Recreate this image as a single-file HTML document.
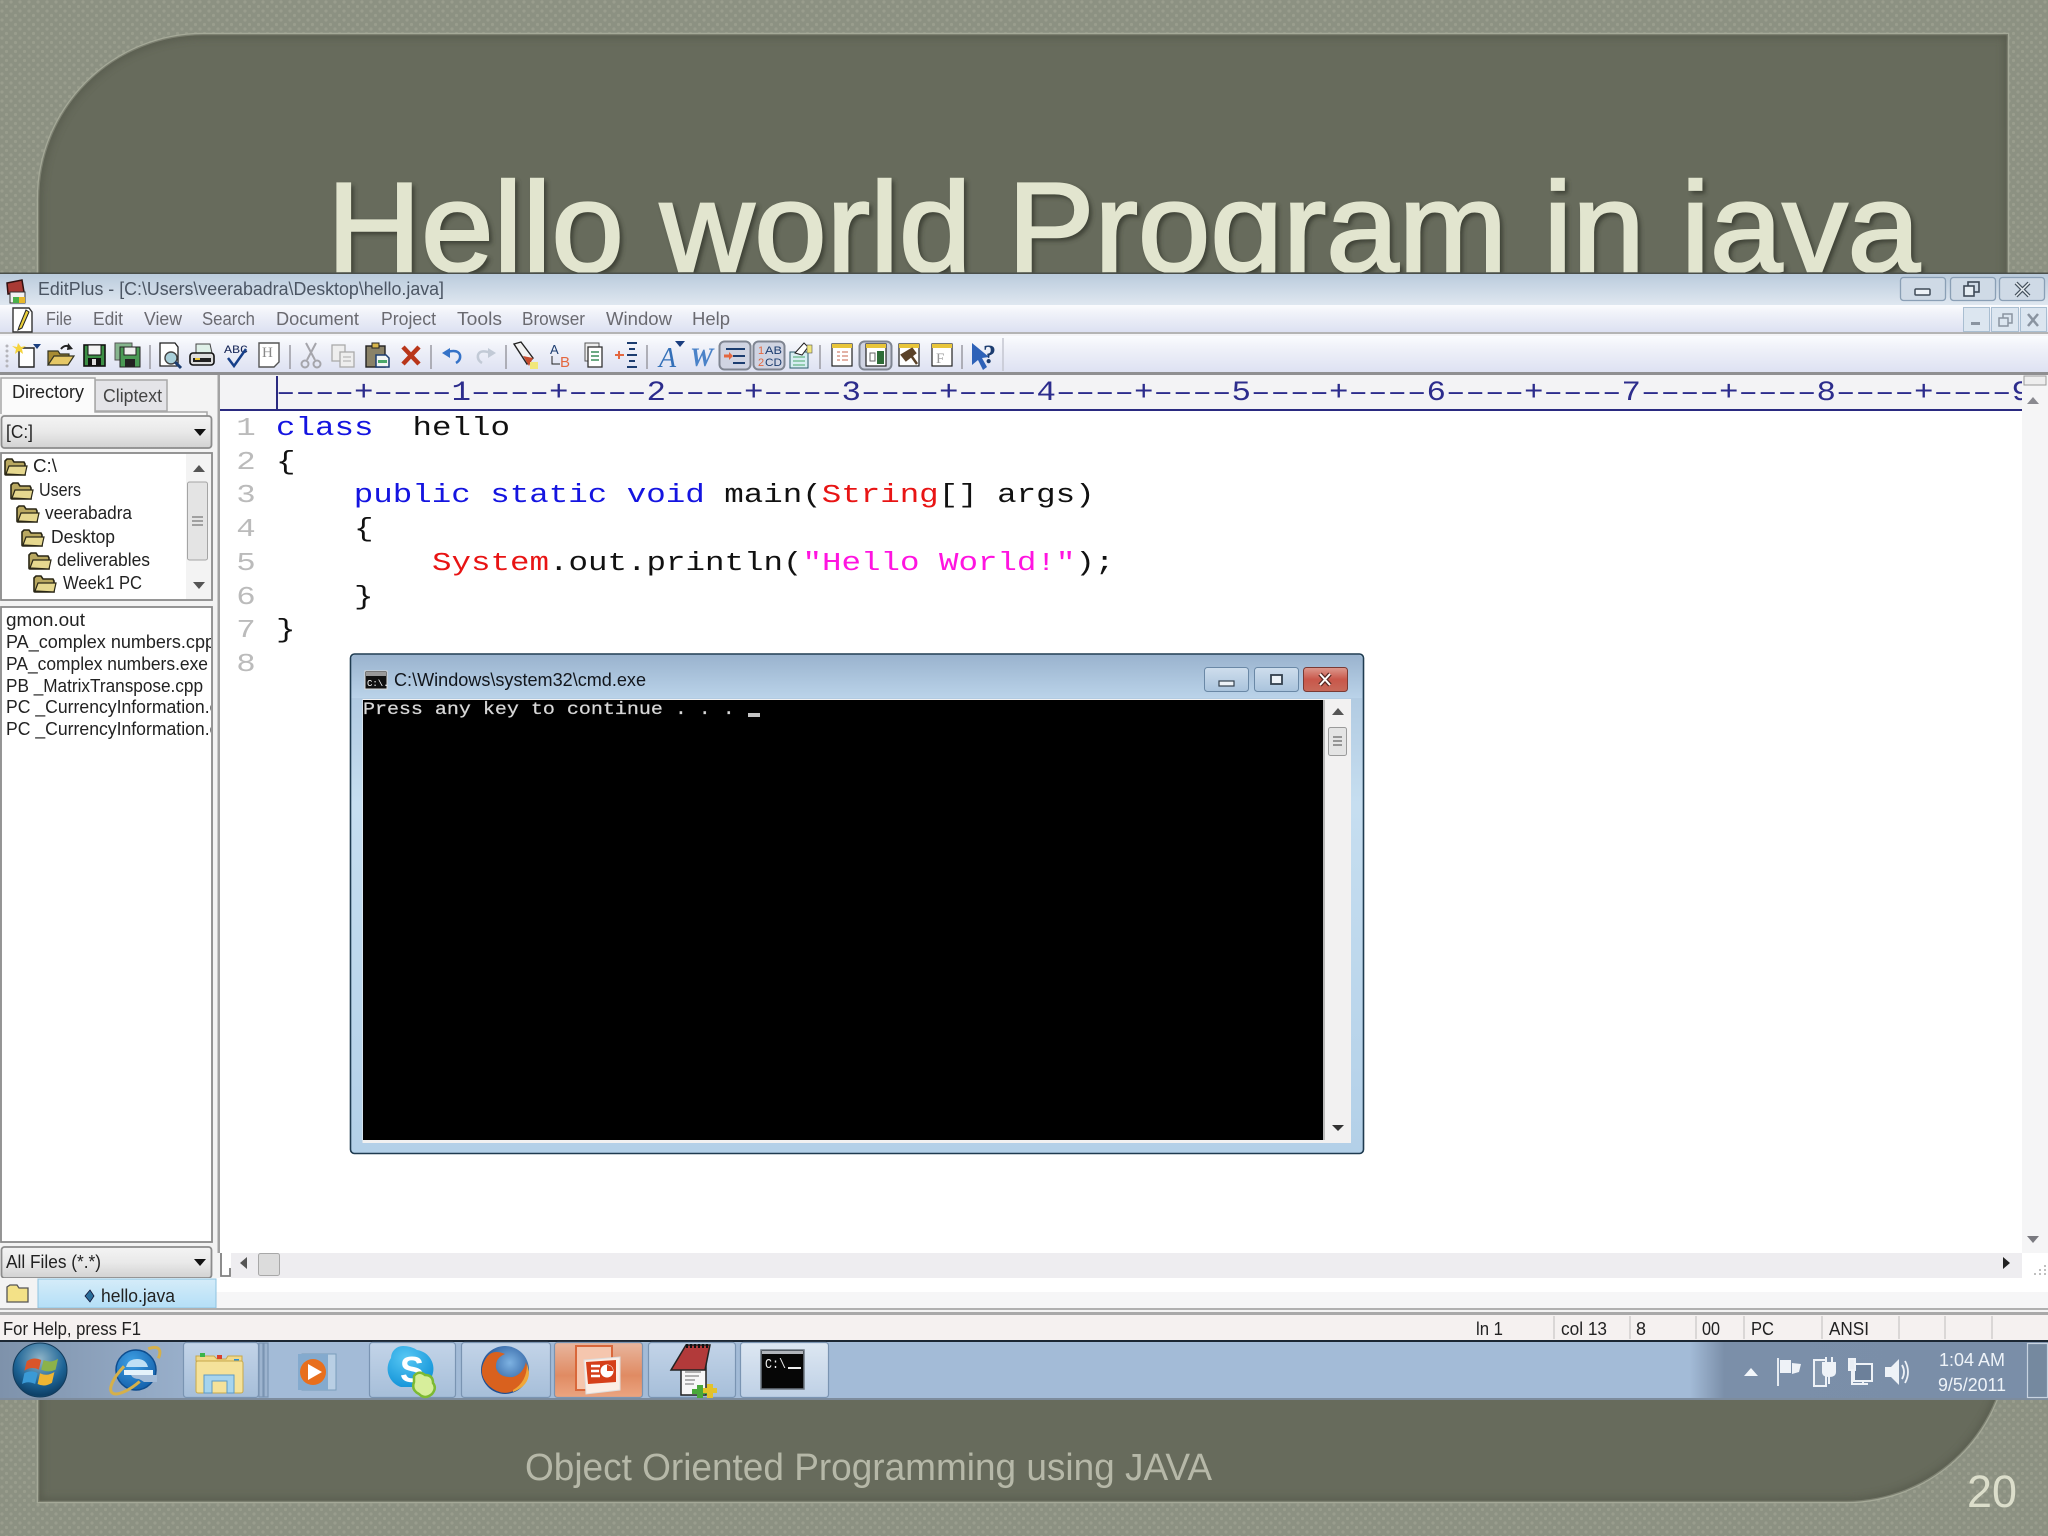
<!DOCTYPE html>
<html><head><meta charset="utf-8"><title>Hello world Program in java</title>
<style>
html,body{margin:0;padding:0;background:#8b9080}
svg{display:block}
text{font-family:"Liberation Sans",sans-serif;white-space:pre}
.m{font-family:"Liberation Mono",monospace}
.ui{font-size:18px;fill:#222}
.menu{font-size:18px;fill:#6a6a70}
</style></head><body>
<svg xmlns="http://www.w3.org/2000/svg" width="2048" height="1536" viewBox="0 0 2048 1536">
<defs>
<pattern id="dots" width="9" height="9" patternUnits="userSpaceOnUse"><rect width="9" height="9" fill="#8c9182"/><circle cx="2" cy="2" r="1.6" fill="#999d8d"/><circle cx="6.5" cy="6.5" r="1.6" fill="#999d8d"/></pattern>
<linearGradient id="tb" x1="0" y1="0" x2="0" y2="1"><stop offset="0" stop-color="#bacbdc"/><stop offset="1" stop-color="#dfe7f0"/></linearGradient>
<linearGradient id="mb" x1="0" y1="0" x2="0" y2="1"><stop offset="0" stop-color="#fbfcfe"/><stop offset=".3" stop-color="#f0f2f9"/><stop offset="1" stop-color="#dde1f2"/></linearGradient>
<linearGradient id="combo" x1="0" y1="0" x2="0" y2="1"><stop offset="0" stop-color="#f4f4f4"/><stop offset=".5" stop-color="#e9e9e9"/><stop offset="1" stop-color="#d2d2d2"/></linearGradient>
<linearGradient id="cmdt" x1="0" y1="0" x2="0" y2="1"><stop offset="0" stop-color="#9ab3ce"/><stop offset="1" stop-color="#bad3e9"/></linearGradient>
<linearGradient id="cmdf" x1="0" y1="0" x2="0" y2="1"><stop offset="0" stop-color="#a9c3dc"/><stop offset=".3" stop-color="#c6def0"/><stop offset="1" stop-color="#b3d0e8"/></linearGradient>
<linearGradient id="task" x1="0" y1="0" x2="1" y2="0"><stop offset="0" stop-color="#7e92ab"/><stop offset=".07" stop-color="#93a9c4"/><stop offset=".13" stop-color="#a3bbd7"/><stop offset=".825" stop-color="#a3bbd7"/><stop offset=".842" stop-color="#7b8fa9"/><stop offset="1" stop-color="#7a8ea8"/></linearGradient>
<linearGradient id="btn" x1="0" y1="0" x2="0" y2="1"><stop offset="0" stop-color="#c3d4e8"/><stop offset="1" stop-color="#a6bed9"/></linearGradient>
<linearGradient id="btnw" x1="0" y1="0" x2="0" y2="1"><stop offset="0" stop-color="#dde7f2"/><stop offset="1" stop-color="#bed0e5"/></linearGradient>
<linearGradient id="ppt" x1="0" y1="0" x2="0" y2="1"><stop offset="0" stop-color="#e8b69e"/><stop offset=".6" stop-color="#e08b63"/><stop offset="1" stop-color="#eba581"/></linearGradient>
<linearGradient id="closeb" x1="0" y1="0" x2="0" y2="1"><stop offset="0" stop-color="#dd9a8f"/><stop offset=".5" stop-color="#c9574a"/><stop offset="1" stop-color="#c76a5a"/></linearGradient>
<linearGradient id="winb" x1="0" y1="0" x2="0" y2="1"><stop offset="0" stop-color="#cfdeed"/><stop offset="1" stop-color="#a9c3dc"/></linearGradient>
<linearGradient id="tab" x1="0" y1="0" x2="0" y2="1"><stop offset="0" stop-color="#d5ecf9"/><stop offset="1" stop-color="#b4dff7"/></linearGradient>
<radialGradient id="orb" cx=".5" cy=".3" r=".75"><stop offset="0" stop-color="#8fb4c8"/><stop offset=".6" stop-color="#1d6496"/><stop offset=".9" stop-color="#0d3f66"/><stop offset="1" stop-color="#35a5cc"/></radialGradient>
<radialGradient id="sky" cx=".4" cy=".3" r=".8"><stop offset="0" stop-color="#58c8f4"/><stop offset="1" stop-color="#0d8fd6"/></radialGradient>
<radialGradient id="ff" cx=".6" cy=".35" r=".6"><stop offset="0" stop-color="#7db2e2"/><stop offset="1" stop-color="#1d4e92"/></radialGradient>
<radialGradient id="ie" cx=".4" cy=".3" r=".8"><stop offset="0" stop-color="#3fa0e4"/><stop offset="1" stop-color="#0f5aa6"/></radialGradient>
<filter id="b2"><feGaussianBlur stdDeviation="2"/></filter>
<filter id="b5"><feGaussianBlur stdDeviation="4"/></filter>
<clipPath id="panel"><path d="M203 34H2008V1340A162 162 0 0 1 1846 1502H38V199A165 165 0 0 1 203 34Z"/></clipPath>
<clipPath id="flist"><rect x="0" y="606" width="211" height="300"/></clipPath>
<clipPath id="rul"><rect x="220" y="376" width="1802" height="34"/></clipPath>
<g id="fd"><path d="M1 6V17a1 1 0 0 0 1 1H21V7L20 5H10L8 2H3L1 4Z" fill="#b9a860" stroke="#2a2716" stroke-width="1.6"/><path d="M2 17L5 9H23L21 18Z" fill="#e6d88f" stroke="#2a2716" stroke-width="1.2"/></g>
</defs>

<!-- slide background -->
<rect width="2048" height="1536" fill="url(#dots)"/>
<path d="M203 34H2008V1340A162 162 0 0 1 1846 1502H38V199A165 165 0 0 1 203 34Z" fill="#676b5c" stroke="#a5a998" stroke-width="2.5"/>
<g clip-path="url(#panel)"><path d="M203 34H2008V1340A162 162 0 0 1 1846 1502H38V199A165 165 0 0 1 203 34Z" fill="none" stroke="#53574a" stroke-width="7" opacity=".8" filter="url(#b5)"/></g>

<!-- slide title -->
<text x="330" y="274" font-size="127" fill="#33362c" stroke="#33362c" stroke-width="2" opacity=".75" textLength="1593" lengthAdjust="spacingAndGlyphs" filter="url(#b2)">Hello world Program in java</text>
<text x="327" y="271" font-size="127" fill="#e2e5cf" stroke="#e2e5cf" stroke-width="2.5" textLength="1593" lengthAdjust="spacingAndGlyphs">Hello world Program in java</text>

<!-- footer -->
<text x="525" y="1480" font-size="38" fill="#b6b8a8" textLength="687" lengthAdjust="spacingAndGlyphs">Object Oriented Programming using JAVA</text>
<text x="1967" y="1507" font-size="45" fill="#dcdecb" textLength="50" lengthAdjust="spacingAndGlyphs">20</text>

<!-- EditPlus window -->
<rect x="0" y="273" width="2048" height="1068" fill="#fff"/>
<rect x="0" y="272.500" width="2048" height="1.500" fill="#4a4f4a"/>
<rect x="0" y="274" width="2048" height="31" fill="url(#tb)"/>
<text x="38" y="295" font-size="18" fill="#4b5563" textLength="406" lengthAdjust="spacingAndGlyphs">EditPlus - [C:\Users\veerabadra\Desktop\hello.java]</text>
<!-- app icon -->
<g transform="translate(5,279)"><path d="M2 4L17 1 19 13 3 15Z" fill="#a83a34" stroke="#301010" stroke-width="1.5"/><rect x="5" y="13" width="15" height="11" fill="#f2f2f2" stroke="#333"/><rect x="8" y="18" width="6" height="6" fill="#4bb04b"/><rect x="14" y="18" width="6" height="6" fill="#e8b82c"/></g>
<!-- caption buttons -->
<g fill="#cfdae6" stroke="#8a9fb5" stroke-width="1.3">
<rect x="1900.5" y="277.5" width="45" height="23" rx="3"/><rect x="1950.5" y="277.5" width="45" height="23" rx="3"/><rect x="1999.5" y="277.5" width="45" height="23" rx="3"/></g>
<rect x="1915" y="289" width="15" height="6" rx="1" fill="#eef3f8" stroke="#3e4a57" stroke-width="1.5"/>
<g fill="none" stroke="#3e4a57" stroke-width="1.6"><rect x="1968" y="282" width="11" height="10" fill="#cfdae6"/><rect x="1964" y="286" width="10" height="10" fill="#e6edf3"/></g>
<path d="M2016 283l13 13M2029 283l-13 13" stroke="#46525f" stroke-width="4"/><path d="M2016 283l13 13M2029 283l-13 13" stroke="#eaf0f5" stroke-width="1.5"/>

<!-- menu -->
<rect x="0" y="305" width="2048" height="27" fill="url(#mb)"/>
<rect x="0" y="332" width="2048" height="2" fill="#b4b4b4"/><rect x="0" y="334" width="2048" height="2" fill="#f4f4f6"/>
<g transform="translate(12,307)"><path d="M1 1H17L20 5V25H1Z" fill="#fff" stroke="#333" stroke-width="1.4"/><path d="M7 20L14 3 17 5 10 21 6 23Z" fill="#e9cf3a" stroke="#222"/></g>
<g class="menu">
<text class="menu" x="46" y="325" textLength="26" lengthAdjust="spacingAndGlyphs">File</text>
<text class="menu" x="93" y="325" textLength="30" lengthAdjust="spacingAndGlyphs">Edit</text>
<text class="menu" x="144" y="325" textLength="38" lengthAdjust="spacingAndGlyphs">View</text>
<text class="menu" x="202" y="325" textLength="53" lengthAdjust="spacingAndGlyphs">Search</text>
<text class="menu" x="276" y="325" textLength="83" lengthAdjust="spacingAndGlyphs">Document</text>
<text class="menu" x="381" y="325" textLength="55" lengthAdjust="spacingAndGlyphs">Project</text>
<text class="menu" x="457" y="325" textLength="45" lengthAdjust="spacingAndGlyphs">Tools</text>
<text class="menu" x="522" y="325" textLength="63" lengthAdjust="spacingAndGlyphs">Browser</text>
<text class="menu" x="606" y="325" textLength="66" lengthAdjust="spacingAndGlyphs">Window</text>
<text class="menu" x="692" y="325" textLength="38" lengthAdjust="spacingAndGlyphs">Help</text>
</g>
<g fill="#dce6f0" stroke="#a9bed1"><rect x="1963.5" y="307.5" width="26" height="24"/><rect x="1991.5" y="307.5" width="27" height="24"/><rect x="2020.5" y="307.5" width="26" height="24"/></g>
<rect x="1971" y="322" width="9" height="3" fill="#8a94a0"/>
<g fill="none" stroke="#8a94a0" stroke-width="1.5"><rect x="2003" y="314" width="9" height="9"/><rect x="1999" y="318" width="9" height="8" fill="#dce6f0"/></g>
<path d="M2028 314l10 12M2038 314l-10 12" stroke="#8a94a0" stroke-width="2.5"/>

<!-- toolbar -->
<rect x="0" y="336" width="2048" height="37" fill="url(#mb)"/>
<rect x="0" y="372" width="2048" height="3" fill="#8f8f91"/>
<g fill="#b5b5bb"><circle cx="7" cy="346" r="1.5"/><circle cx="7" cy="351" r="1.5"/><circle cx="7" cy="356" r="1.5"/><circle cx="7" cy="361" r="1.5"/><circle cx="7" cy="366" r="1.5"/></g>
<g stroke="#9a9aa2" stroke-width="1.5"><path d="M150 345V369M290 345V369M431 345V369M506 345V369M647 345V369M820 345V369M962 345V369"/></g>
<path d="M1003 338V371" stroke="#c4c6d0" stroke-width="1.5"/>
<!-- new -->
<g transform="translate(27,355)"><path d="M-8-7H7V12H-8Z" fill="#fff" stroke="#222" stroke-width="1.4"/><path d="M-9-12l3 4 5-1-4 3 1 5-4-3-4 3 1-5-4-3 5 1Z" fill="#f5d33b"/><path d="M6-11H14L10-6Z" fill="#1b3f80"/></g>
<!-- open -->
<g transform="translate(61,355)"><path d="M-13 10V-4H-3L-1-1H8V4" fill="#a88b33" stroke="#332" stroke-width="1.2"/><path d="M-13 10L-7 1H13L7 10Z" fill="#e6c866" stroke="#332" stroke-width="1.2"/><path d="M0-6Q4-11 9-8" fill="none" stroke="#222" stroke-width="2"/><path d="M7-12L12-6 6-5Z" fill="#222"/></g>
<!-- save -->
<g transform="translate(95,355)"><rect x="-11" y="-10" width="21" height="21" fill="#3c8f45" stroke="#111" stroke-width="1.600"/><rect x="-7" y="-10" width="13" height="10" fill="#f4f4f4" stroke="#111"/><rect x="-7" y="3" width="13" height="8" fill="#111"/><rect x="-3" y="4" width="4" height="6" fill="#ddd"/></g>
<!-- save all -->
<g transform="translate(128,355)"><rect x="-13" y="-12" width="17" height="17" fill="#86b58e" stroke="#555"/><rect x="-8" y="-8" width="20" height="20" fill="#4a9a55" stroke="#222"/><rect x="-4" y="-8" width="12" height="8" fill="#eee" stroke="#222"/><rect x="-3" y="4" width="10" height="8" fill="#222"/></g>
<!-- preview -->
<g transform="translate(170,355)"><path d="M-10-12H5L8-8V11H-10Z" fill="#fff" stroke="#222" stroke-width="1.3"/><circle cx="1" cy="3" r="6" fill="#a9d0da" stroke="#444" stroke-width="1.4"/><path d="M5 7L11 13" stroke="#1c3d70" stroke-width="3"/></g>
<!-- print -->
<g transform="translate(202,355)"><path d="M-6-11H8L10-2H-6Z" fill="#dff0e8" stroke="#444"/><rect x="-12" y="-2" width="24" height="12" rx="3" fill="#ddd" stroke="#111" stroke-width="1.6"/><rect x="-9" y="3" width="18" height="4" fill="#222"/><rect x="-7" y="3" width="5" height="2" fill="#e8c53a"/></g>
<!-- spell -->
<g transform="translate(236,355)"><text x="-12" y="-2" class="m" font-size="11" fill="#1b2a5a" textLength="24" lengthAdjust="spacingAndGlyphs">ABC</text><path d="M-8 3L-2 11 10-6" fill="none" stroke="#17408a" stroke-width="2.500"/></g>
<!-- H -->
<g transform="translate(269,355)"><path d="M-10-12H10V7L5 12H-10Z" fill="#fff" stroke="#555" stroke-width="1.4"/><text x="-7" y="2" font-size="15" fill="#888" style="font-family:'Liberation Serif',serif">H</text></g>
<!-- cut -->
<g transform="translate(311,355)" fill="none" stroke="#a5a5ab" stroke-width="2"><path d="M-5-12L4 5M5-12L-4 5"/><circle cx="-6" cy="9" r="3.5"/><circle cx="6" cy="9" r="3.5"/></g>
<!-- copy -->
<g transform="translate(343,355)" fill="#eee" stroke="#aaa" stroke-width="1.3"><rect x="-11" y="-10" width="13" height="16"/><rect x="-3" y="-3" width="14" height="15"/><path d="M0 2H8M0 6H8" stroke-width="1"/></g>
<!-- paste -->
<g transform="translate(377,355)"><rect x="-11" y="-9" width="19" height="21" fill="#8a8268" stroke="#222" stroke-width="1.4"/><rect x="-5" y="-12" width="7" height="5" fill="#d8b54a" stroke="#222"/><path d="M-1 0H9L12 3V12H-1Z" fill="#f1f5f4" stroke="#1c3d70" stroke-width="1.5"/><rect x="1" y="5" width="9" height="3" fill="#4aa86a"/></g>
<!-- delete -->
<path d="M403 347L419 364M419 347L403 364" stroke="#b9361a" stroke-width="4.5" fill="none"/>
<!-- undo redo -->
<g fill="none" stroke-width="2.500"><path d="M447 352Q458 349 460 355Q461 360 456 363" stroke="#3573c8"/><path d="M491 353Q480 349 478 355Q477 360 482 363" stroke="#c2cad6"/></g>
<path d="M442 353L450 348 450 358Z" fill="#3573c8"/><path d="M496 353L488 348 488 358Z" fill="#c2cad6"/>
<!-- find tools -->
<g transform="translate(526,355)"><path d="M-12-11L-5-13 7 3 1 9Z" fill="#f2f2f2" stroke="#222" stroke-width="1.4"/><path d="M-3 1L7 3 3 11Z" fill="#c54a2c"/><rect x="4" y="7" width="8" height="7" fill="#f1e77b"/></g>
<g transform="translate(560,355)"><text x="-10" y="-1" font-size="13" fill="#1c3d70">A</text><text x="0" y="12" font-size="15" fill="#e4673f">B</text><path d="M-8 1V9H0" stroke="#222" fill="none"/></g>
<g transform="translate(594,355)"><rect x="-9" y="-12" width="14" height="18" fill="#eee" stroke="#555"/><rect x="-6" y="-8" width="14" height="20" fill="#fff" stroke="#333" stroke-width="1.3"/><path d="M-3-3H5M-3 1H5M-3 5H5" stroke="#3d8d5a" stroke-width="1.5"/></g>
<g transform="translate(627,355)"><path d="M-12 0H-3M-8-4V4" stroke="#e4673f" stroke-width="2"/><path d="M0-12H10M2-6H8M0 0H10M2 6H8M0 12H10" stroke="#1c3d70" stroke-width="2"/></g>
<!-- font -->
<text x="659" y="367" font-size="28" font-style="italic" fill="#3470b8" style="font-family:'Liberation Serif',serif">A</text><path d="M675 341H685L680 347Z" fill="#1b3f80"/>
<text x="690" y="366" font-size="26" font-style="italic" font-weight="bold" fill="#4a82c8" style="font-family:'Liberation Serif',serif">W</text>
<!-- toggled -->
<rect x="719.5" y="341.5" width="31" height="28" rx="5" fill="#d0d4e2" stroke="#7f8591" stroke-width="2"/>
<path d="M726 349H745M733 356H745M733 363H745" stroke="#1c3d70" stroke-width="2"/><path d="M724 356H731" stroke="#e4673f" stroke-width="3"/><path d="M729 352L733 356 729 360Z" fill="#e4673f"/>
<rect x="753.5" y="341.5" width="31" height="28" rx="5" fill="#d0d4e2" stroke="#7f8591" stroke-width="2"/>
<text x="758" y="354" font-size="11" fill="#e4673f">1</text><text x="758" y="366" font-size="11" fill="#e4673f">2</text><text x="765" y="354" font-size="11" fill="#1c3d70" textLength="17" lengthAdjust="spacingAndGlyphs">AB</text><text x="765" y="366" font-size="11" fill="#1c3d70" textLength="17" lengthAdjust="spacingAndGlyphs">CD</text>
<g transform="translate(801,355)"><rect x="-11" y="-3" width="18" height="16" fill="#d7eef2" stroke="#2b5d6b"/><path d="M-8 2H4M-8 6H4M-8 10H4" stroke="#4aa86a"/><path d="M-6-2L3-12 7-8 1 0Z" fill="#fff" stroke="#222"/><rect x="6" y="-10" width="5" height="8" fill="#f1e77b" stroke="#555" stroke-width=".6"/></g>
<!-- panels -->
<g transform="translate(842,355)"><rect x="-10" y="-11" width="20" height="22" fill="#fff" stroke="#222" stroke-width="1.2"/><rect x="-10" y="-11" width="20" height="4" fill="#e8c53a"/><path d="M-5-3H-2M-5 1H-2M-5 5H-2M0-3H6M0 1H6M0 5H6" stroke="#c7664c"/></g>
<rect x="859.5" y="341.5" width="32" height="28" rx="5" fill="#d0d4e2" stroke="#7f8591" stroke-width="2"/>
<g transform="translate(876,355)"><rect x="-10" y="-11" width="20" height="22" fill="#fff" stroke="#222" stroke-width="1.2"/><rect x="-10" y="-11" width="20" height="4" fill="#e8c53a"/><rect x="1" y="-4" width="7" height="13" fill="#2d6b36"/><rect x="-6" y="-2" width="5" height="8" fill="none" stroke="#666"/></g>
<g transform="translate(909,355)"><rect x="-10" y="-11" width="20" height="22" fill="#fff" stroke="#222" stroke-width="1.2"/><rect x="-10" y="-11" width="20" height="4" fill="#e8c53a"/><path d="M-7 0L3-6 6-2 -3 5ZM1-1L8 9" stroke="#5b4228" stroke-width="2.5" fill="#5b4228"/></g>
<g transform="translate(942,355)"><rect x="-10" y="-11" width="20" height="22" fill="#fff" stroke="#222" stroke-width="1.2"/><rect x="-10" y="-11" width="20" height="4" fill="#e8c53a"/><text x="-6" y="8" font-size="15" fill="#999" style="font-family:'Liberation Serif',serif">F</text></g>
<path d="M972 343V365L978 360 983 370 987 367 982 358 989 357Z" fill="#2e62b8"/>
<text x="983" y="363" font-size="26" font-weight="bold" fill="#1c3d70" style="font-family:'Liberation Serif',serif">?</text>

<!-- left sidebar -->
<rect x="0" y="375" width="220" height="935" fill="#f3f3f3"/>
<rect x="95" y="380" width="72" height="31" fill="#e4e4e8" stroke="#a8a8a8" stroke-width="1.5"/>
<path d="M1 414V378H95V412H207V416" fill="#fbfbfb" stroke="#a8a8a8" stroke-width="1.5"/>
<text class="ui" x="12" y="398" textLength="72" lengthAdjust="spacingAndGlyphs">Directory</text>
<text x="103" y="402" font-size="18" fill="#444" textLength="59" lengthAdjust="spacingAndGlyphs">Cliptext</text>
<rect x="1.5" y="416" width="210" height="32" rx="3" fill="url(#combo)" stroke="#8c8c8c" stroke-width="1.8"/>
<text class="ui" x="6" y="438" textLength="27" lengthAdjust="spacingAndGlyphs">[C:]</text>
<path d="M194 429H206L200 436Z" fill="#111"/>
<!-- tree -->
<rect x="1" y="453" width="211" height="147" fill="#fff" stroke="#8a8a8a" stroke-width="1.8"/>
<rect x="186" y="454" width="25" height="145" fill="#f3f3f3"/>
<path d="M193 472H205L199 465Z" fill="#555"/><path d="M193 582H205L199 589Z" fill="#555"/>
<rect x="187.5" y="482" width="20" height="78" rx="2" fill="#e4e4e4" stroke="#a4a4a4"/><path d="M192 517H203M192 521H203M192 525H203" stroke="#777" stroke-width="1.2"/>
<use href="#fd" x="4" y="457"/><use href="#fd" x="10" y="481"/><use href="#fd" x="16" y="504"/><use href="#fd" x="21" y="528"/><use href="#fd" x="28" y="551"/><use href="#fd" x="33" y="574"/>
<text class="ui" x="33" y="472" textLength="24" lengthAdjust="spacingAndGlyphs">C:\</text>
<text class="ui" x="39" y="496" textLength="42" lengthAdjust="spacingAndGlyphs">Users</text>
<text class="ui" x="45" y="519" textLength="87" lengthAdjust="spacingAndGlyphs">veerabadra</text>
<text class="ui" x="51" y="543" textLength="64" lengthAdjust="spacingAndGlyphs">Desktop</text>
<text class="ui" x="57" y="566" textLength="93" lengthAdjust="spacingAndGlyphs">deliverables</text>
<text class="ui" x="63" y="589" textLength="79" lengthAdjust="spacingAndGlyphs">Week1 PC</text>
<!-- file list -->
<rect x="1" y="607" width="211" height="635" fill="#fff" stroke="#8a8a8a" stroke-width="1.8"/>
<g clip-path="url(#flist)">
<text class="ui" x="6" y="626" textLength="79" lengthAdjust="spacingAndGlyphs">gmon.out</text>
<text class="ui" x="6" y="648" textLength="209" lengthAdjust="spacingAndGlyphs">PA_complex numbers.cpp</text>
<text class="ui" x="6" y="670" textLength="202" lengthAdjust="spacingAndGlyphs">PA_complex numbers.exe</text>
<text class="ui" x="6" y="692" textLength="197" lengthAdjust="spacingAndGlyphs">PB _MatrixTranspose.cpp</text>
<text class="ui" x="6" y="713" textLength="232" lengthAdjust="spacingAndGlyphs">PC _CurrencyInformation.cpp</text>
<text class="ui" x="6" y="735" textLength="232" lengthAdjust="spacingAndGlyphs">PC _CurrencyInformation.cpp</text>
</g>
<rect x="1.5" y="1247" width="210" height="31" rx="3" fill="url(#combo)" stroke="#8c8c8c" stroke-width="1.8"/>
<text class="ui" x="6" y="1268" textLength="95" lengthAdjust="spacingAndGlyphs">All Files (*.*)</text>
<path d="M194 1259H206L200 1266Z" fill="#111"/>
<rect x="217.500" y="375" width="2.500" height="878" fill="#a2a2a2"/>

<!-- editor -->
<rect x="220" y="375" width="1828" height="35" fill="#f3f3f5"/>
<rect x="220" y="409" width="1802" height="2" fill="#2a2a80"/>
<rect x="2022" y="375" width="26" height="878" fill="#f5f5f6"/>
<rect x="2024" y="376" width="22" height="9" fill="#eee" stroke="#9a9a9a"/>
<path d="M2027 404H2039L2033 397Z" fill="#8a8a90"/><path d="M2027 1236H2039L2033 1243Z" fill="#7a7a80"/>
<rect x="276" y="376" width="2" height="34" fill="#2a2a80"/>
<g clip-path="url(#rul)"><g transform="scale(1.1607,1)"><text class="m" x="237.8" y="400" font-size="28" fill="#2c2c8c">––––+––––1––––+––––2––––+––––3––––+––––4––––+––––5––––+––––6––––+––––7––––+––––8––––+––––9</text></g></g>
<g transform="scale(1.25,1)" font-size="26" class="m">
<g fill="#bbbbbb"><text class="m" x="189" y="435">1</text><text class="m" x="189" y="469">2</text><text class="m" x="189" y="502">3</text><text class="m" x="189" y="536">4</text><text class="m" x="189" y="570">5</text><text class="m" x="189" y="604">6</text><text class="m" x="189" y="637">7</text><text class="m" x="189" y="671">8</text></g>
<text class="m" x="220.8" y="435" fill="#111"><tspan fill="#1414e0">class</tspan>  hello</text>
<text class="m" x="220.8" y="469" fill="#111">{</text>
<text class="m" x="283" y="502" fill="#111"><tspan fill="#1414e0">public static void</tspan> main(<tspan fill="#e81414">String</tspan>[] args)</text>
<text class="m" x="283.2" y="536" fill="#111">{</text>
<text class="m" x="345.6" y="570" fill="#111"><tspan fill="#e81414">System</tspan>.out.println(<tspan fill="#ff14e0">"Hello World!"</tspan>);</text>
<text class="m" x="283.2" y="604" fill="#111">}</text>
<text class="m" x="220.8" y="637" fill="#111">}</text>
</g>

<!-- cmd window -->
<rect x="350.5" y="654" width="1013" height="499.5" rx="4" fill="url(#cmdf)" stroke="#1f3b50" stroke-width="1.600"/>
<path d="M351.500 698V659a4 4 0 0 1 4-4H1358a4 4 0 0 1 4 4V698Z" fill="url(#cmdt)"/>
<rect x="365" y="671" width="22" height="18" fill="#111" stroke="#ddd" stroke-width="1"/><rect x="366" y="672" width="20" height="4" fill="#999"/>
<text x="367" y="686" class="m" font-size="9" fill="#fff">C:\.</text>
<text x="394" y="686" font-size="18" fill="#12161c" textLength="252" lengthAdjust="spacingAndGlyphs">C:\Windows\system32\cmd.exe</text>
<rect x="1204.500" y="667.500" width="44" height="24" rx="3" fill="url(#winb)" stroke="#6a88a6"/>
<rect x="1254.500" y="667.500" width="44" height="24" rx="3" fill="url(#winb)" stroke="#6a88a6"/>
<rect x="1303.500" y="667.500" width="44" height="24" rx="3" fill="url(#closeb)" stroke="#7a3a34"/>
<rect x="1219" y="681" width="15" height="5" fill="#eef3f8" stroke="#33404d" stroke-width="1.2"/>
<rect x="1271" y="675" width="11" height="9" fill="#eef3f8" stroke="#33404d" stroke-width="1.8"/>
<path d="M1320 674l10 11M1330 674l-10 11" stroke="#5a2a24" stroke-width="4.5"/><path d="M1320 674l10 11M1330 674l-10 11" stroke="#fff" stroke-width="2"/>
<rect x="362.500" y="699" width="988.500" height="444" fill="#f2f1f1"/>
<rect x="363" y="700" width="960" height="440" fill="#000"/>
<rect x="1323" y="700" width="2" height="440" fill="#bbb"/>
<g transform="scale(1.111,1)"><text class="m" x="326.700" y="714" font-size="18" fill="#dadada" stroke="#c4c4c4" stroke-width=".3">Press any key to continue . . . </text></g>
<rect x="748" y="713" width="12" height="4" fill="#c4c4c4"/>
<path d="M1332 715H1344L1338 708Z" fill="#555"/><path d="M1332 1125H1344L1338 1131Z" fill="#333"/>
<rect x="1328.500" y="727.500" width="18" height="28" rx="2" fill="#e4e4e4" stroke="#9a9a9a"/><path d="M1333 737H1342M1333 741H1342M1333 745H1342" stroke="#666" stroke-width="1.2"/>

<!-- horizontal scroll -->
<rect x="220" y="1253" width="1802" height="25" fill="#eeedf0"/>
<rect x="220" y="1252" width="11" height="26" fill="#fff"/>
<path d="M221 1253V1276H230V1268" fill="none" stroke="#808080" stroke-width="1.800"/>
<path d="M247 1257V1269L240 1263Z" fill="#555"/><path d="M2003 1257V1269L2010 1263Z" fill="#222"/>
<rect x="258.500" y="1253.500" width="21" height="22" rx="2" fill="#dcdcdc" stroke="#a8a8a8"/>
<path d="M2034 1274h2M2039 1274h2M2044 1274h2M2039 1270h2M2044 1270h2M2044 1266h2" stroke="#aaa" stroke-width="1.5"/>

<!-- doc tabs -->
<rect x="0" y="1278" width="2048" height="30" fill="#fff"/>
<rect x="0" y="1292" width="2048" height="16" fill="#f6f6f7"/>
<rect x="0" y="1278" width="38" height="30" fill="#f3f3f3"/>
<path d="M7 1302V1287L10 1285H17L19 1288H28V1302Z" fill="#f3e187" stroke="#555" stroke-width="1.3"/>
<rect x="38" y="1279" width="178" height="29" fill="url(#tab)" stroke="#8ec3e0"/>
<path d="M90 1290L94 1296 90 1302 85 1296Z" fill="#2a6d9a" stroke="#113" stroke-width=".8"/>
<text class="ui" x="101" y="1302" textLength="74" lengthAdjust="spacingAndGlyphs">hello.java</text>
<!-- status -->
<rect x="0" y="1308" width="2048" height="2" fill="#b0b0b0"/><rect x="0" y="1310" width="2048" height="2" fill="#f3f3f3"/><rect x="0" y="1312" width="2048" height="3" fill="#a9a9a9"/>
<rect x="0" y="1315" width="2048" height="25" fill="#f5f1f0"/>
<path d="M1554 1316V1339M1630 1316V1339M1696 1316V1339M1744 1316V1339M1822 1316V1339M1899 1316V1339M1945 1316V1339M1992 1316V1339" stroke="#cfcccb" stroke-width="1.4"/>
<text class="ui" x="3" y="1335" textLength="138" lengthAdjust="spacingAndGlyphs">For Help, press F1</text>
<text class="ui" x="1476" y="1335" textLength="27" lengthAdjust="spacingAndGlyphs">ln 1</text>
<text class="ui" x="1561" y="1335" textLength="46" lengthAdjust="spacingAndGlyphs">col 13</text>
<text class="ui" x="1636" y="1335" textLength="10" lengthAdjust="spacingAndGlyphs">8</text>
<text class="ui" x="1702" y="1335" textLength="18" lengthAdjust="spacingAndGlyphs">00</text>
<text class="ui" x="1751" y="1335" textLength="23" lengthAdjust="spacingAndGlyphs">PC</text>
<text class="ui" x="1829" y="1335" textLength="40" lengthAdjust="spacingAndGlyphs">ANSI</text>

<!-- taskbar -->
<rect x="0" y="1340" width="2048" height="2" fill="#1c2733"/>
<rect x="0" y="1342" width="2048" height="57" fill="url(#task)"/>
<rect x="0" y="1398" width="2048" height="2" fill="#7d8c9d"/>
<rect x="2027.500" y="1343.500" width="20" height="54" fill="#75899f" stroke="#c7d3e0" stroke-width="1.2"/>
<!-- orb -->
<circle cx="40" cy="1370" r="27" fill="url(#orb)" stroke="#123a5a" stroke-width="1"/>
<g transform="translate(40,1372) scale(1.2) translate(-38,-1372)"><path d="M27 1363Q33 1359 39 1362L37 1370Q31 1367 25 1371Z" fill="#d9552a"/><path d="M41 1362Q47 1365 53 1361L51 1370Q45 1373 39 1370Z" fill="#8cb24a"/><path d="M25 1373Q31 1370 36 1373L34 1382Q28 1379 23 1382Z" fill="#3a9ad6"/><path d="M38 1373Q44 1376 50 1372L48 1381Q42 1385 36 1382Z" fill="#efb533"/></g>
<!-- IE -->
<g transform="translate(136,1370)"><circle r="20" fill="url(#ie)" stroke="#0e4d8e" stroke-width="1.500"/><path d="M-10-3Q-8-11 1-11T12-3Z" fill="#bfe0f5"/><rect x="-12" y="0" width="29" height="5" fill="#e4f2fb"/><path d="M-5 5H21V12H8Q5 10 3 9Q-3 9-5 5Z" fill="#a3bbd7"/><path d="M2 9H20Q15 17 5 18Q-2 17-5 12Q-3 8 2 9Z" fill="#1f72c0" opacity=".0"/><ellipse cx="-1" cy="0" rx="32" ry="11" transform="rotate(-43)" fill="none" stroke="#d5b04a" stroke-width="3" stroke-dasharray="62 30" stroke-dashoffset="-40"/></g>
<!-- buttons -->
<g stroke="#7a94b2" stroke-width="1.2"><rect x="183.500" y="1342.500" width="75" height="55" rx="3" fill="url(#btn)"/>
<rect x="259" y="1343" width="4" height="54" fill="#9db4cf"/><rect x="264" y="1343" width="4" height="54" fill="#9db4cf"/>
<rect x="369.500" y="1342.500" width="86" height="55" rx="3" fill="url(#btn)"/><rect x="461.500" y="1342.500" width="89" height="55" rx="3" fill="url(#btn)"/>
<rect x="554.500" y="1342.500" width="88" height="55" rx="3" fill="url(#ppt)"/><rect x="648.500" y="1342.500" width="87" height="55" rx="3" fill="url(#btn)"/>
<rect x="740.500" y="1342.500" width="88" height="55" rx="3" fill="url(#btnw)"/></g>
<!-- explorer -->
<g transform="translate(220,1371)"><path d="M-24-15H-6L-3-12H6L8-15H22V-10H-24Z" fill="#f0d98a" stroke="#c8a84a"/><rect x="-20" y="-18" width="5" height="4" fill="#3bb44a"/><rect x="-3" y="-16" width="5" height="4" fill="#d9402a"/><rect x="14" y="-12" width="5" height="4" fill="#2a8fd6"/><rect x="-24" y="-10" width="47" height="32" rx="2" fill="#f5e29a" stroke="#c8a84a"/><path d="M-16 22V4H14V22H7V10H-8V22Z" fill="#a6d4ee" stroke="#5c9ac6"/></g>
<!-- media -->
<g transform="translate(315,1372)"><rect x="-13" y="-18" width="34" height="36" fill="#b9cfe4" stroke="#7a9cbb"/><rect x="-17" y="-18" width="30" height="36" fill="#84aace"/><circle cx="-2" cy="0" r="13" fill="#e86f1d"/><path d="M-7-8L7 0-7 8Z" fill="#fff"/></g>
<!-- skype -->
<g transform="translate(411,1370)"><path d="M-20-12A12 12 0 0 1-8-24Q0-24 6-20A19 19 0 0 1 21 6Q24 12 21 17L-10 17A19 19 0 0 1-20-12Z" fill="url(#sky)"/><text x="-11" y="12" font-size="36" font-weight="bold" fill="#fff">S</text><path d="M3 6Q8 0 14 5Q22 5 22 13Q26 18 21 24Q14 30 8 24Q0 20 3 12Z" fill="#d7ee9b" stroke="#7cba33" stroke-width="2.5"/></g>
<!-- firefox -->
<g transform="translate(505,1370)"><circle r="24" fill="url(#ff)"/><path d="M-20-10Q-14-22 0-16Q-10-12-9-2Q-6 8 8 7Q18 4 21-8Q26 8 12 19Q-2 28-16 16Q-28 4-20-10Z" fill="#d9611e"/><path d="M8 20Q22 12 22-6L24 2Q24 16 8 22Z" fill="#f0a83a"/></g>
<!-- ppt -->
<g transform="translate(598,1370)"><path d="M-22-24H14V20H-22Z" fill="#f5c6ae" stroke="#d9673a" stroke-width="2"/><path d="M-14-10L22-13 22 20-12 24Z" fill="#fbeee6" stroke="#ddd"/><path d="M-12-8L18-10V12L-10 14Z" fill="#d53f1a"/><path d="M-7-4H2M-7 1H1M-7 6H2" stroke="#fff" stroke-width="2.4"/><circle cx="9" cy="1" r="6.500" fill="#fff"/><path d="M9 1V-5A6 6 0 0 1 15 1Z" fill="#d53f1a"/></g>
<!-- editplus -->
<g transform="translate(691,1370)"><path d="M-10-6H15V25H-10Z" fill="#f7f7f7" stroke="#222" stroke-width="1.500"/><path d="M-6 2H10M-6 6H8M-6 10H4M-6 14H3" stroke="#999" stroke-width="1.6"/><path d="M-5-25H19L14 0H-20Z" fill="#b23a3a" stroke="#222" stroke-width="1.500"/><path d="M-4-26V-22M0-26V-22M4-26V-22M8-26V-22M12-26V-22M16-26V-22" stroke="#111" stroke-width="2"/><path d="M6 15H12V19H17V24H12V28H6V24H1V19H6Z" fill="#4aa83a"/><path d="M16 14H22V18H26V23H22V28H16V23H12V18H16Z" fill="#e3c22a"/></g>
<!-- cmd -->
<g transform="translate(783,1370)"><rect x="-22" y="-20" width="43" height="39" fill="#060606" stroke="#6d7680" stroke-width="1.500"/><rect x="-21" y="-19" width="41" height="3" fill="#b0b4ba"/><text x="-18" y="-2" class="m" font-size="14" fill="#eee" textLength="21" lengthAdjust="spacingAndGlyphs">C:\</text><rect x="5" y="-3" width="13" height="2" fill="#eee"/></g>
<!-- tray -->
<path d="M1744 1376H1758L1751 1368Z" fill="#f2f6fa"/>
<g transform="translate(1777,1372)" fill="#eef2f7" stroke="#e6ebf1"><path d="M1-14V14" stroke-width="2"/><path d="M3-12H14V1H3Z" stroke="none"/><path d="M15-9L24-8 22 0 15 2Z" stroke="none"/></g>
<g transform="translate(1823,1372)" fill="none" stroke="#eef2f7" stroke-width="2"><path d="M-9-12H3V14H-9Z" fill="#8698ae"/><path d="M3-15V-9M9-15V-9M0-9H12V0Q12 4 6 4T0 0Z" fill="#eef2f7"/><path d="M6 4V12"/></g>
<g transform="translate(1860,1372)" fill="none" stroke="#eef2f7" stroke-width="2"><path d="M-6-8H12V9H-6Z" fill="#6c809a"/><path d="M-4 12H8M3 9V12"/><rect x="-11" y="-13" width="6" height="11" fill="#e8edf3"/><path d="M-8-2V12H-2"/></g>
<g transform="translate(1896,1372)"><path d="M-11-5H-5L3-13V13L-5 5H-11Z" fill="#eef2f7"/><path d="M6-7Q10 0 6 7M9-11Q15 0 9 11" fill="none" stroke="#eef2f7" stroke-width="1.800"/></g>
<text x="1939" y="1366" font-size="18" fill="#eef3f8" textLength="66" lengthAdjust="spacingAndGlyphs">1:04 AM</text>
<text x="1938" y="1391" font-size="18" fill="#eef3f8" textLength="68" lengthAdjust="spacingAndGlyphs">9/5/2011</text>
</svg>
</body></html>
